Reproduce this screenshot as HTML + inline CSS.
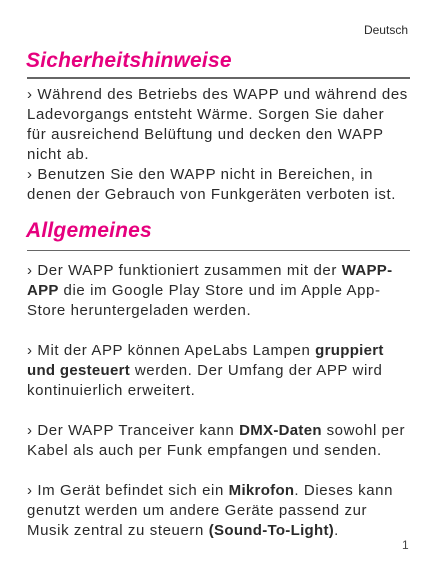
<!DOCTYPE html>
<html><head><meta charset="utf-8"><style>
body{margin:0;width:438px;height:579px;background:#fff;position:relative;overflow:hidden;font-family:"Liberation Sans",sans-serif;color:#2a2a2a}
.l{position:absolute;left:27px;font-size:15px;white-space:nowrap;line-height:20px;letter-spacing:0.6px}
.h{position:absolute;left:26px;color:#e6007e;font-weight:bold;font-style:italic;font-size:21px;letter-spacing:0.2px}
.r{position:absolute;left:27px;width:383px;background:#666}
b{font-weight:bold;letter-spacing:0.3px}
</style></head><body>
<div style="position:absolute;right:30px;top:23px;font-size:12px">Deutsch</div>
<div class="h" style="top:49px">Sicherheitshinweise</div>
<div class="r" style="top:77px;height:2px"></div>
<div class="l" style="top:85px">› Während des Betriebs des WAPP und während des</div>
<div class="l" style="top:105px">Ladevorgangs entsteht Wärme. Sorgen Sie daher</div>
<div class="l" style="top:125px">für ausreichend Belüftung und decken den WAPP</div>
<div class="l" style="top:145px">nicht ab.</div>
<div class="l" style="top:165px">› Benutzen Sie den WAPP nicht in Bereichen, in</div>
<div class="l" style="top:185px">denen der Gebrauch von Funkgeräten verboten ist.</div>
<div class="h" style="top:219px">Allgemeines</div>
<div class="r" style="top:250px;height:1px"></div>
<div class="l" style="top:261px">› Der WAPP funktioniert zusammen mit der <b>WAPP-</b></div>
<div class="l" style="top:281px"><b>APP</b> die im Google Play Store und im Apple App-</div>
<div class="l" style="top:301px">Store heruntergeladen werden.</div>
<div class="l" style="top:341px">› Mit der APP können ApeLabs Lampen <b>gruppiert</b></div>
<div class="l" style="top:361px"><b>und gesteuert</b> werden. Der Umfang der APP wird</div>
<div class="l" style="top:381px">kontinuierlich erweitert.</div>
<div class="l" style="top:421px">› Der WAPP Tranceiver kann <b>DMX-Daten</b> sowohl per</div>
<div class="l" style="top:441px">Kabel als auch per Funk empfangen und senden.</div>
<div class="l" style="top:481px">› Im Gerät befindet sich ein <b>Mikrofon</b>. Dieses kann</div>
<div class="l" style="top:501px">genutzt werden um andere Geräte passend zur</div>
<div class="l" style="top:521px">Musik zentral zu steuern <b>(Sound-To-Light)</b>.</div>
<div style="position:absolute;left:402px;top:538px;font-size:12px;color:#444">1</div>
</body></html>
